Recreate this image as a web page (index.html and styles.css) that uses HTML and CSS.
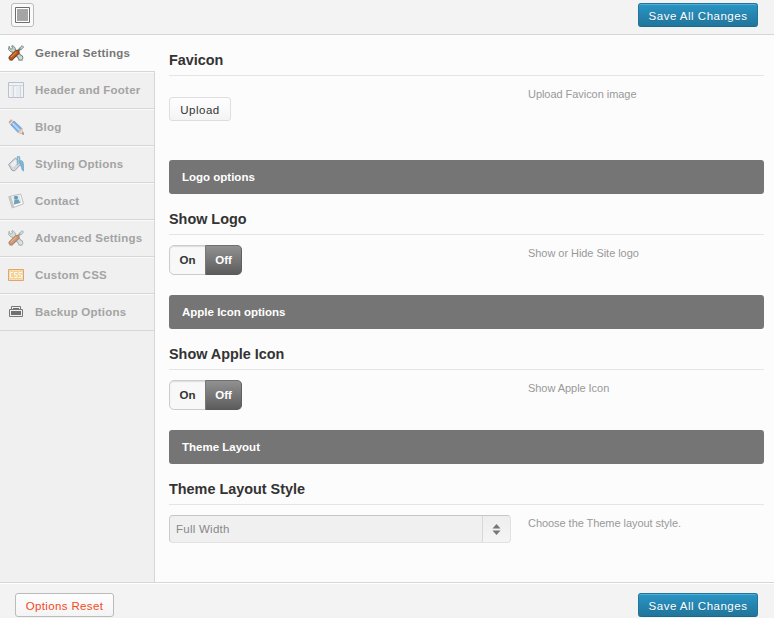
FILE: index.html
```
<!DOCTYPE html>
<html lang="en">
<head>
<meta charset="utf-8">
<title>Theme Options</title>
<link rel="stylesheet" href="styles.css">
</head>
<body>
<svg class="defs" width="0" height="0" aria-hidden="true">
  <symbol id="tools" viewBox="0 0 16 16">
    <path d="M1 15.5h4M10 15.5h5" stroke="#c9cccb" stroke-width="1"/>
    <path d="M3.500 3.500L13 13" stroke="#6f807f" stroke-width="4.600"/>
    <path d="M1.200 1.200L.5 4.500 3 7l3.500-.3.8-3.500L5 .6 3.700 1l1 2.200L3.500 4.500 2 3.800z" fill="#c8d6d3" stroke="#71817f" stroke-width=".9"/>
    <circle cx="12.500" cy="12.700" r="2.400" fill="#d5dfdc" stroke="#71817f"/>
    <path d="M4 4l8.500 8.500" stroke="#c4d1cf" stroke-width="2.800"/>
    <path d="M9 7l4-4" stroke="#687b7a" stroke-width="2.400"/>
    <path d="M11.500 3.200l2.700-2.600L15.600 2l-2.400 2.700z" fill="#c9d8d7" stroke="#71817f" stroke-width=".9"/>
    <path d="M3.200 12.800L9 7.400" stroke="#813f18" stroke-width="5.200" stroke-linecap="round"/>
    <path d="M3.200 12.600l5.500-5.200" stroke="#c05e20" stroke-width="3.200" stroke-linecap="round"/>
    <path d="M3 12l5-4.800" stroke="#eba164" stroke-width=".8"/>
  </symbol>
</svg>
<header class="topbar">
  <a class="expand"><svg width="15" height="16"><path d="M.5.5h14v15H.5z" fill="#fff" stroke="#6d6d6d"/><path d="M2 3h11v10H2z" fill="#a5a5a5"/><path d="M2 2.500h11M2 13.500h11" stroke="#aaa"/></svg></a>
  <button class="btn primary">Save All Changes</button>
</header>
<div class="main">
  <nav class="nav">
    <a class="item active"><svg class="ico"><use href="#tools"/></svg><span>General Settings</span></a>
    <a class="item"><svg class="ico" viewBox="0 0 16 16"><path d="M.5.5h15v15H.5z" fill="#e4e9f1" stroke="#9aa5b6"/><path d="M1 3.500h14M5.500 3v12M12.500 4v11" stroke="#b9c5d8"/><path d="M1.500 2h13M2 4v11M7 5v10M14 4v11" fill="none" stroke="#fff"/></svg><span>Header and Footer</span></a>
    <a class="item"><svg class="ico" viewBox="0 0 16 16"><path d="M.4 2.900L3.200.2l2 1.500L2 5z" fill="#d86b4c"/><path d="M1.600 4.600l3-3.400 1.200 1-2.800 3.500z" fill="#ddd"/><path d="M2.600 5.700L6 2l8 7.600-3.800 4z" fill="#2c83dd" stroke="#2165b3" stroke-width=".8"/><path d="M4.400 4.200l7.400 7.300" stroke="#91c7ff" stroke-width="1.800"/><path d="M10 13.400l3.800-3.800 1.900 6z" fill="#efc59c" stroke="#b88e65" stroke-width=".7"/><path d="M13.600 14.200L16 16l-.8-3z" fill="#444"/></svg><span>Blog</span></a>
    <a class="item"><svg class="ico" viewBox="0 0 16 16"><path d="M11 4c4 0 5 2 5 5.500V15.500c-2-.4-2.900-2-3-4.500L11 8z" fill="#2f8ac5"/><path d="M.5 8.500L7.500 2l5.500 6-6.300 6.800-2.700-.4z" fill="#c0c5cf" stroke="#686e7b"/><path d="M2.500 8.300l5-4.700 2.800 3.200-5.600 4.600z" fill="#eceef2"/><path d="M9.500 9V1.200q1-1.400 2 .3V8" fill="none" stroke="#3d8db9" stroke-width="1.500"/></svg><span>Styling Options</span></a>
    <a class="item"><svg class="ico" viewBox="0 0 16 16"><path d="M.7 3.700L12.800 1l2.700 9.800L4.200 15z" fill="#fff" stroke="#a0a0a0"/><path d="M1 4l2.200-.5L6.300 14l-2.100.8z" fill="#aaa"/><path d="M4.300 3.600l7-1.500 2.200 7.300-7 2.500z" fill="#c7e2ea"/><circle cx="8" cy="4.800" r="2" fill="#145f80"/><path d="M5.900 11.500L6.400 7l4-.6 2 3.400z" fill="#167091"/></svg><span>Contact</span></a>
    <a class="item"><svg class="ico"><use href="#tools"/></svg><span>Advanced Settings</span></a>
    <a class="item"><svg class="ico css" viewBox="0 0 16 16"><path d="M.5 2.500h15v11H.5z" fill="#ffb938" stroke="#c66c18"/><path d="M1.500 3.500h13v9h-13z" fill="none" stroke="#ffd178"/><path d="M5 5.500H2.500v5H5M9.500 5.500h-3V8H9v2.500H6M14 5.500h-3V8h2.500v2.500h-3" fill="none" stroke="#fff" stroke-width="1"/></svg><span>Custom CSS</span></a>
    <a class="item"><svg class="ico dark" viewBox="0 0 16 16"><path d="M3.500 5V2.500h9V5M1.500 5.500h13v7h-13z" fill="none" stroke="#777"/><path d="M5 4h6v1H5zM3 7h10v4H3z" fill="#707070"/></svg><span>Backup Options</span></a>
  </nav>
  <main class="content">
    <section class="option first">
      <h3>Favicon</h3>
      <div class="row"><div class="control"><button class="btn upload">Upload</button></div><p>Upload Favicon image</p></div>
    </section>
    <h4>Logo options</h4>
    <section class="option">
      <h3>Show Logo</h3>
      <div class="row"><div class="control"><div class="switch"><span>On</span><span class="sel">Off</span></div></div><p>Show or Hide Site logo</p></div>
    </section>
    <h4>Apple Icon options</h4>
    <section class="option">
      <h3>Show Apple Icon</h3>
      <div class="row"><div class="control"><div class="switch"><span>On</span><span class="sel">Off</span></div></div><p>Show Apple Icon</p></div>
    </section>
    <h4>Theme Layout</h4>
    <section class="option">
      <h3>Theme Layout Style</h3>
      <div class="row"><div class="control"><div class="select"><span>Full Width</span><i><svg width="9" height="11"><path d="M4.500 0L8.500 4.500h-8zM.5 6.500h8L4.500 11z" fill="#777"/></svg></i></div></div><p>Choose the Theme layout style.</p></div>
    </section>
  </main>
</div>
<footer class="bottombar">
  <button class="btn reset">Options Reset</button>
  <button class="btn primary">Save All Changes</button>
</footer>
</body>
</html>
```
FILE: styles.css
```
* { box-sizing: border-box; }
body {
  margin: 0;
  height: 618px;
  overflow: hidden;
  display: flex;
  flex-direction: column;
  background: #fcfcfc;
  font: 12px/18px "Liberation Sans", Arial, sans-serif;
  color: #333;
}
.defs { display: block; position: absolute; }
.topbar {
  height: 35px;
  flex: none;
  display: flex;
  justify-content: space-between;
  align-items: flex-start;
  padding: 3px 16px 0 11px;
  background: #f3f3f3;
  border-bottom: 1px solid #d6d6d6;
}
.expand {
  width: 23px;
  height: 24px;
  display: flex;
  align-items: center;
  justify-content: center;
  border: 1px solid #bbb;
  border-radius: 3px;
  background: #fafafa;
}
.btn {
  height: 24px;
  padding: 2px 0 0;
  border: 1px solid #bbb;
  border-radius: 3px;
  font: 11.5px/20px "Liberation Sans", Arial, sans-serif;
  letter-spacing: .35px;
  white-space: nowrap;
  text-align: center;
}
.primary {
  width: 120px;
  color: #fff;
  letter-spacing: .5px;
  background: linear-gradient(#2a95c5, #21759b);
  border-color: #21759b #21759b #1e6a8d;
  box-shadow: inset 0 1px 0 rgba(120, 200, 230, .5);
  text-shadow: 0 1px 0 rgba(0, 0, 0, .1);
}
.upload {
  width: 62px;
  letter-spacing: .5px;
  border-color: #dedede;
  background: linear-gradient(#fefefe, #f4f4f4);
  color: #333;
}
.reset {
  width: 99px;
  color: #f04a24;
  background: linear-gradient(#fefefe, #f4f4f4);
}
.main { height: 547px; flex: none; display: flex; }
.nav {
  width: 155px;
  flex: none;
  background: #f0f0f0;
  border-right: 1px solid #d6d6d6;
}
.item {
  height: 37px;
  display: flex;
  align-items: center;
  gap: 11px;
  padding: 0 0 2px 8px;
  border-top: 1px solid #fafafa;
  border-bottom: 1px solid #d6d6d6;
  color: #a3a3a3;
  font-size: 11.5px;
  font-weight: bold;
  letter-spacing: .23px;
  white-space: nowrap;
}
.item.active {
  width: 155px;
  background: #fcfcfc;
  border-top-color: #fcfcfc;
  color: #777;
}
.ico { width: 16px; height: 16px; flex: none; opacity: .6; }
.ico.css { opacity: .55; }
.active .ico, .ico.dark { opacity: 1; }
.content { flex: 1; padding: 0 10px 0 14px; }
.option { height: 101px; padding-top: 15px; }
.option.first { height: 125px; }
h3 {
  margin: 0;
  height: 26px;
  border-bottom: 1px solid #e5e5e5;
  font-size: 14.4px;
  line-height: 20px;
  color: #333;
}
h4 {
  margin: 0;
  height: 34px;
  padding-left: 13px;
  border-radius: 3px;
  background: #757575;
  color: #fff;
  font-size: 11.5px;
  line-height: 34px;
}
.row { display: flex; padding-top: 10px; }
.first .control { padding-top: 11px; }
.control { width: 359px; flex: none; }
p { margin: -1px 0 0; font-size: 11px; letter-spacing: -.05px; color: #999; }
.switch {
  width: 73px;
  height: 30px;
  display: flex;
  border: 1px solid #ccc;
  border-radius: 5px;
  background: #f8f8f8;
  box-shadow: inset 0 1px 1px #ddd;
  font-size: 11.5px;
  font-weight: bold;
  line-height: 28px;
  text-align: center;
}
.switch span { width: 35px; }
.switch .sel {
  width: 37px;
  margin: -1px -1px -1px 0;
  border: 1px solid #666;
  border-color: #707070 #606060 #5a5a5a #777;
  border-radius: 0 5px 5px 0;
  background: linear-gradient(#919191, #5c5c5c);
  color: #fff;
}
.select {
  width: 342px;
  height: 28px;
  display: flex;
  justify-content: space-between;
  padding-left: 6px;
  border: 1px solid #e1e1e1;
  border-top-color: #c6c6c6;
  border-left-color: #ccc;
  border-radius: 4px;
  background: #f0f0f0;
  color: #888;
  line-height: 27px;
  font-size: 11.5px;
  letter-spacing: .25px;
}
.select i {
  width: 28px;
  display: flex;
  align-items: center;
  justify-content: center;
  border-left: 1px solid #d8d8d8;
  background: linear-gradient(#eee, #f4f4f4);
  border-radius: 0 4px 4px 0;
}
.bottombar {
  height: 36px;
  flex: none;
  display: flex;
  justify-content: space-between;
  padding: 10px 16px 0 15px;
  background: #f3f3f3;
  border-top: 1px solid #d6d6d6;
  box-shadow: inset 0 1px 0 #fff;
}
```
